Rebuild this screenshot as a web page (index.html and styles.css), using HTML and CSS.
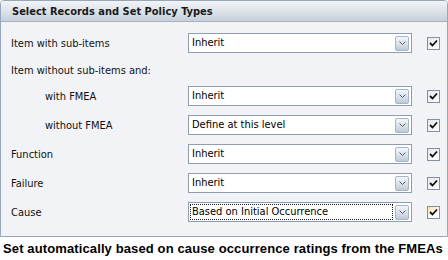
FILE: index.html
```html
<!DOCTYPE html>
<html lang="en">
<head>
    <meta charset="UTF-8">
    <title>Select Records and Set Policy Types</title>
    <link rel="stylesheet" href="styles.css">
</head>
<body>
    <div class="panel">
        <div class="panel-header">Select Records and Set Policy Types</div>
        <div class="panel-body">
            <div class="row">
                <span class="label">Item with sub-items</span>
                <div class="combo"><span class="combo-text">Inherit</span><span class="drop-btn"><svg width="7" height="4" viewBox="0 0 7 4"><path d="M0.5 0.5 L3.5 3.5 L6.5 0.5" fill="none" stroke="#4d5a6b" stroke-width="1"/></svg></span></div>
                <span class="check"><svg width="9" height="8" viewBox="0 0 9 8"><path d="M1 4 L3.5 6.5 L8 1.5" fill="none" stroke="#111" stroke-width="1.8"/></svg></span>
            </div>

            <div class="row group-title">
                <span class="label">Item without sub-items and:</span>
            </div>

            <div class="row">
                <span class="label sub">with FMEA</span>
                <div class="combo"><span class="combo-text">Inherit</span><span class="drop-btn"><svg width="7" height="4" viewBox="0 0 7 4"><path d="M0.5 0.5 L3.5 3.5 L6.5 0.5" fill="none" stroke="#4d5a6b" stroke-width="1"/></svg></span></div>
                <span class="check"><svg width="9" height="8" viewBox="0 0 9 8"><path d="M1 4 L3.5 6.5 L8 1.5" fill="none" stroke="#111" stroke-width="1.8"/></svg></span>
            </div>

            <div class="row">
                <span class="label sub">without FMEA</span>
                <div class="combo"><span class="combo-text">Define at this level</span><span class="drop-btn"><svg width="7" height="4" viewBox="0 0 7 4"><path d="M0.5 0.5 L3.5 3.5 L6.5 0.5" fill="none" stroke="#4d5a6b" stroke-width="1"/></svg></span></div>
                <span class="check"><svg width="9" height="8" viewBox="0 0 9 8"><path d="M1 4 L3.5 6.5 L8 1.5" fill="none" stroke="#111" stroke-width="1.8"/></svg></span>
            </div>

            <div class="row">
                <span class="label">Function</span>
                <div class="combo"><span class="combo-text">Inherit</span><span class="drop-btn"><svg width="7" height="4" viewBox="0 0 7 4"><path d="M0.5 0.5 L3.5 3.5 L6.5 0.5" fill="none" stroke="#4d5a6b" stroke-width="1"/></svg></span></div>
                <span class="check"><svg width="9" height="8" viewBox="0 0 9 8"><path d="M1 4 L3.5 6.5 L8 1.5" fill="none" stroke="#111" stroke-width="1.8"/></svg></span>
            </div>

            <div class="row">
                <span class="label">Failure</span>
                <div class="combo"><span class="combo-text">Inherit</span><span class="drop-btn"><svg width="7" height="4" viewBox="0 0 7 4"><path d="M0.5 0.5 L3.5 3.5 L6.5 0.5" fill="none" stroke="#4d5a6b" stroke-width="1"/></svg></span></div>
                <span class="check"><svg width="9" height="8" viewBox="0 0 9 8"><path d="M1 4 L3.5 6.5 L8 1.5" fill="none" stroke="#111" stroke-width="1.8"/></svg></span>
            </div>

            <div class="row">
                <span class="label">Cause</span>
                <div class="combo focused"><span class="combo-text">Based on Initial Occurrence</span><span class="drop-btn"><svg width="7" height="4" viewBox="0 0 7 4"><path d="M0.5 0.5 L3.5 3.5 L6.5 0.5" fill="none" stroke="#4d5a6b" stroke-width="1"/></svg></span></div>
                <span class="check hot"><svg width="9" height="8" viewBox="0 0 9 8"><path d="M1 4 L3.5 6.5 L8 1.5" fill="none" stroke="#111" stroke-width="1.8"/></svg></span>
            </div>
        </div>
    </div>

    <p class="hint">Set automatically based on cause occurrence ratings from the FMEAs</p>
</body>
</html>
```

FILE: styles.css
```css
* {
    box-sizing: border-box;
}
body {
    margin: 0;
    background: #ffffff;
    color: #000000;
    font-family: 'DejaVu Sans Condensed', 'DejaVu Sans', sans-serif;
    font-size: 11px;
}
.panel {
    width: 448px;
    height: 237px;
    border: 1px solid #95a5ba;
    border-radius: 4px 4px 0 0;
    background: #f1f3f6;
    overflow: hidden;
}
.panel-header {
    height: 21px;
    padding: 4px 0 0 11px;
    background: linear-gradient(#f2f4f7, #dde3ea 50%, #c6cfdb);
    border-bottom: 1px solid #a4b1c3;
    font-weight: bold;
    font-size: 11px;
    color: #1a1a1a;
}
.panel-body {
    display: flex;
    flex-direction: column;
    gap: 9px;
    padding: 11px 0 0 10px;
}
.row {
    display: flex;
    align-items: center;
    height: 20px;
}
.group-title {
    height: 15px;
    align-items: flex-end;
}
.label {
    width: 177px;
    color: #111111;
}
.label.sub {
    padding-left: 34px;
}
.combo {
    width: 224px;
    height: 20px;
    display: flex;
    align-items: center;
    justify-content: space-between;
    background: #ffffff;
    border: 1px solid #8d9db3;
    padding: 0 2px 0 2px;
}
.combo-text {
    flex: 1;
    padding: 0 1px;
    line-height: 14px;
    color: #000000;
}
.combo.focused .combo-text {
    outline: 1px dotted #222222;
    outline-offset: 0;
    margin-right: 3px;
}
.drop-btn {
    width: 14px;
    height: 15px;
    display: flex;
    align-items: center;
    justify-content: center;
    border: 1px solid #a7b4c6;
    border-radius: 2px;
    background: linear-gradient(#f5f7fa, #d6dde6 60%, #bfc9d6);
}
.check {
    width: 13px;
    height: 13px;
    margin-left: 15px;
    display: flex;
    align-items: center;
    justify-content: center;
    border: 1px solid #8190a3;
    background: linear-gradient(135deg, #e4e7eb, #ffffff);
}
.check.hot {
    background: linear-gradient(135deg, #f6dfa8, #ffffff 70%);
}
.hint {
    margin: 4px 0 0 3px;
    font-family: 'Liberation Sans', Arial, sans-serif;
    font-weight: bold;
    font-size: 13px;
    letter-spacing: 0.12px;
    color: #000000;
}
```
